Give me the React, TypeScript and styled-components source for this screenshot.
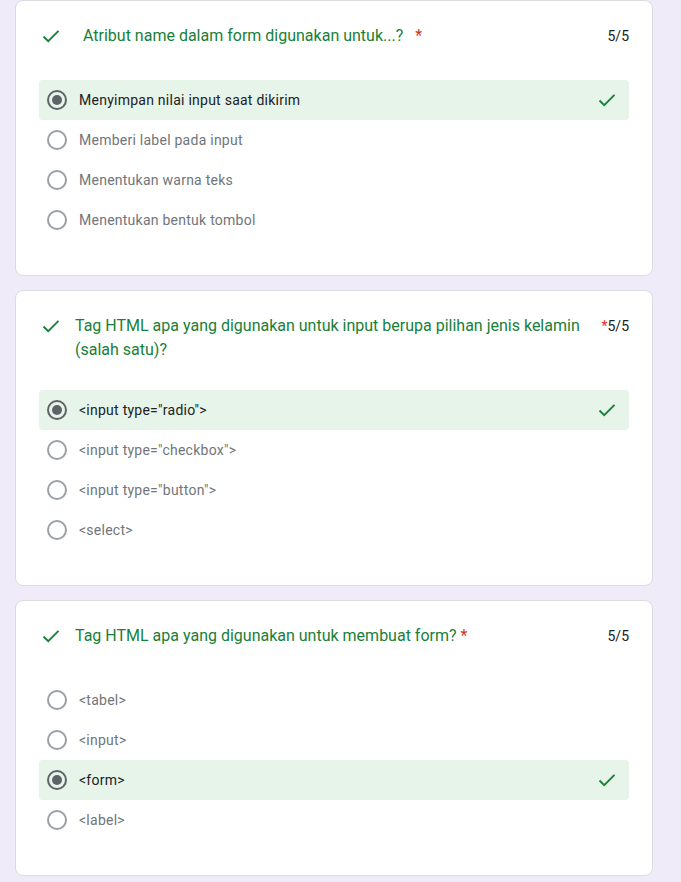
import React from 'react';
import styled, { createGlobalStyle } from 'styled-components';

const GlobalStyle = createGlobalStyle`
  html, body {
    margin: 0;
    padding: 0;
    background: #f0ebf8;
    font-family: Roboto, "Liberation Sans", Arial, sans-serif;
  }
`;

const Page = styled.div`
  display: flex;
  flex-direction: column;
  gap: 14px;
  padding: 0 28px 20px 15px;
`;

const Card = styled.section`
  width: 638px;
  box-sizing: border-box;
  background: #fff;
  border: 1px solid #dadce0;
  border-radius: 8px;
  padding: 23px 23px 35px 23px;
`;

const Header = styled.div`
  display: flex;
  align-items: flex-start;
  margin-bottom: 28px;
`;

const HeaderIcon = styled.div`
  width: 24px;
  height: 24px;
  flex: none;
  display: flex;
  align-items: center;
  justify-content: center;
`;

const Title = styled.div<{ $indent?: boolean }>`
  flex: 1;
  margin-left: ${(p) => (p.$indent ? '20px' : '12px')};
  padding-right: 14px;
  font-size: 16px;
  line-height: 24px;
  color: #188038;
`;

const Star = styled.span<{ $gap?: boolean }>`
  color: #d93025;
  margin-left: ${(p) => (p.$gap ? '12px' : '0')};
`;

const Score = styled.div`
  flex: none;
  font-size: 14px;
  line-height: 24px;
  padding-bottom: 4px;
  color: #202124;
`;

const Options = styled.div`
  display: flex;
  flex-direction: column;
`;

const Row = styled.div<{ $correct?: boolean }>`
  display: flex;
  align-items: center;
  height: 40px;
  padding: 0 10px 0 8px;
  border-radius: 4px;
  background: ${(p) => (p.$correct ? '#e6f4ea' : 'transparent')};
`;

const Radio = styled.span<{ $checked?: boolean }>`
  width: 20px;
  height: 20px;
  box-sizing: border-box;
  flex: none;
  border-radius: 50%;
  border: 2px solid ${(p) => (p.$checked ? '#5f6368' : '#9aa0a6')};
  display: flex;
  align-items: center;
  justify-content: center;

  &::after {
    content: '';
    display: ${(p) => (p.$checked ? 'block' : 'none')};
    width: 10px;
    height: 10px;
    border-radius: 50%;
    background: #5f6368;
  }
`;

const OptionText = styled.span<{ $checked?: boolean }>`
  flex: 1;
  margin-left: 12px;
  font-size: 14px;
  letter-spacing: 0.25px;
  color: ${(p) => (p.$checked ? '#202124' : '#70757a')};
`;

const Check = ({ size = 24 }: { size?: number }) => (
  <svg width={size} height={size} viewBox="0 0 24 24" fill="none">
    <polyline points="4.5,12.5 9.2,17.2 19.5,6.8" stroke="#188038" strokeWidth="1.9" />
  </svg>
);

type Question = {
  title: string;
  indent?: boolean;
  starSide?: boolean;
  options: string[];
  chosen: number;
};

const questions: Question[] = [
  {
    title: 'Atribut name dalam form digunakan untuk...?',
    indent: true,
    options: [
      'Menyimpan nilai input saat dikirim',
      'Memberi label pada input',
      'Menentukan warna teks',
      'Menentukan bentuk tombol',
    ],
    chosen: 0,
  },
  {
    title: 'Tag HTML apa yang digunakan untuk input berupa pilihan jenis kelamin (salah satu)?',
    starSide: true,
    options: ['<input type="radio">', '<input type="checkbox">', '<input type="button">', '<select>'],
    chosen: 0,
  },
  {
    title: 'Tag HTML apa yang digunakan untuk membuat form? ',
    options: ['<tabel>', '<input>', '<form>', '<label>'],
    chosen: 2,
  },
];

export default function App() {
  return (
    <>
      <GlobalStyle />
      <Page>
        {questions.map((q, i) => (
          <Card key={i}>
            <Header>
              <HeaderIcon>
                <Check size={24} />
              </HeaderIcon>
              <Title $indent={q.indent}>
                <span style={{ whiteSpace: 'pre-wrap' }}>{q.title}</span>
                {!q.starSide && <Star $gap={q.indent}>*</Star>}
              </Title>
              <Score>
                {q.starSide && <Star>*</Star>}5/5
              </Score>
            </Header>
            <Options>
              {q.options.map((o, j) => {
                const checked = j === q.chosen;
                return (
                  <Row key={j} $correct={checked}>
                    <Radio $checked={checked} />
                    <OptionText $checked={checked}>{o}</OptionText>
                    {checked && <Check size={24} />}
                  </Row>
                );
              })}
            </Options>
          </Card>
        ))}
      </Page>
    </>
  );
}
